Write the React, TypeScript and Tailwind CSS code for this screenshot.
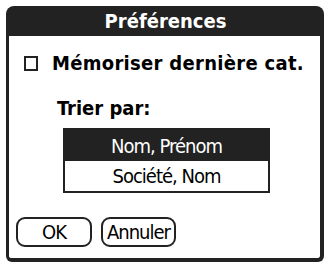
import React from "react";

const bold = { fontFamily: "'DejaVu Sans Condensed', 'DejaVu Sans', 'Liberation Sans', sans-serif" };
const cond = { fontFamily: "'DejaVu Sans Condensed', 'DejaVu Sans', 'Liberation Sans', sans-serif" };

export default function App() {
  return (
    <div className="w-[329px] h-[265px] bg-white pt-[6px] pl-[6px]">
      <div className="w-[318px] h-[256px] flex flex-col">
        <div
          className="h-[30px] bg-[#222222] rounded-t-[8px] flex items-center justify-center text-white font-bold text-[20px] leading-none pl-[1px] font-stretch-condensed"
          style={bold}
        >
          Préférences
        </div>
        <div className="flex-1 bg-white border-l-[3px] border-r-[4px] border-b-[4px] border-[#222222] rounded-b-[6px] flex flex-col">
          <div className="mt-[16px] ml-[15px] h-[22px] flex items-center">
            <div className="w-[14px] h-[15px] border-2 border-[#222222]" />
            <span
              className="ml-[14px] font-bold text-[20px] leading-none text-black tracking-[0.3px] font-stretch-condensed"
              style={bold}
            >
              Mémoriser dernière cat.
            </span>
          </div>
          <div className="mt-[24px] ml-[48px] h-[20px] flex items-center">
            <span className="font-bold text-[20px] leading-none text-black font-stretch-condensed" style={bold}>
              Trier par:
            </span>
          </div>
          <div className="mt-[10px] ml-[54px] w-[207px] border-2 border-[#222222] flex flex-col">
            <div
              className="h-[31px] bg-[#222222] text-white flex items-center justify-center text-[20px] leading-none tracking-[-1px] font-stretch-condensed"
              style={cond}
            >
              Nom, Prénom
            </div>
            <div
              className="h-[30px] bg-white text-black flex items-center justify-center text-[20px] leading-none tracking-[-1px] font-stretch-condensed"
              style={cond}
            >
              Société, Nom
            </div>
          </div>
          <div className="mt-[24px] ml-[7px] flex gap-[9px]">
            <div
              className="w-[76px] h-[30px] border-2 border-[#222222] rounded-[9px] flex items-center justify-center text-[20px] leading-none text-black tracking-[-1px] font-stretch-condensed"
              style={cond}
            >
              OK
            </div>
            <div
              className="w-[75px] h-[30px] border-2 border-[#222222] rounded-[9px] flex items-center justify-center text-[20px] leading-none text-black tracking-[-1px] font-stretch-condensed"
              style={cond}
            >
              Annuler
            </div>
          </div>
        </div>
      </div>
    </div>
  );
}
